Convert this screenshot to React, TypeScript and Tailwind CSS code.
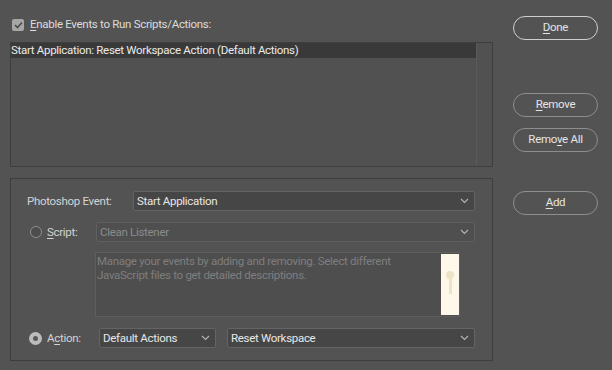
import React from "react";

const font = { fontFamily: 'Roboto, "Open Sans", sans-serif' };

function Chevron() {
  return (
    <svg width="9" height="6" viewBox="0 0 9 6" className="shrink-0">
      <path d="M1 1 L4.5 4.5 L8 1" fill="none" stroke="#b5b5b5" strokeWidth="1.1" />
    </svg>
  );
}

function Select({ text, className, disabled }: { text: string; className: string; disabled?: boolean }) {
  return (
    <div
      className={
        "h-[20px] flex items-center justify-between pl-[3px] pr-[5px] border rounded-[2px] " +
        (disabled
          ? "border-[#5f5f5f] bg-[#4f4f4f] text-[#8c8c8c] "
          : "border-[#646464] bg-[#464646] text-[#e6e6e6] ") +
        className
      }
    >
      <span className="text-[11.5px] leading-none pt-[1px]">{text}</span>
      <Chevron />
    </div>
  );
}

function Btn({ children, bright, className }: { children: React.ReactNode; bright?: boolean; className?: string }) {
  return (
    <div
      className={
        "w-[85px] h-[24px] rounded-full border flex items-center justify-center text-[11.5px] text-[#e4e4e4] " +
        (bright ? "border-[#cfcfcf] " : "border-[#8e8e8e] ") +
        (className || "")
      }
    >
      {children}
    </div>
  );
}

export default function App() {
  return (
    <div className="w-[612px] h-[370px] bg-[#535353] flex overflow-hidden tracking-[-0.3px]" style={font}>
      <div className="ml-[10px] w-[483px] flex flex-col pt-[18px]">
        <div className="h-[13px] flex items-center">
          <div className="ml-[2px] w-[12px] h-[12px] rounded-[2px] bg-[#a6a6a6] flex items-center justify-center">
            <svg width="9" height="8" viewBox="0 0 9 8">
              <path d="M1 4 L3.5 6.5 L8 1.5" fill="none" stroke="#4a4a4a" strokeWidth="1.6" />
            </svg>
          </div>
          <span className="ml-[6px] text-[11.5px] text-[#dcdcdc] leading-none pt-[1px]">
            <u className="underline-offset-2">E</u>nable Events to Run Scripts/Actions:
          </span>
        </div>

        <div className="mt-[11px] h-[125px] border border-[#3e3e3e] bg-[#515151] flex">
          <div className="flex-1">
            <div className="h-[15px] bg-[#393939] flex items-center text-[11.5px] text-[#ebebeb] leading-none">
              Start Application: Reset Workspace Action (Default Actions)
            </div>
          </div>
          <div className="w-[16px] border-l border-[#5a5a5a]" />
        </div>

        <div className="mt-[11px] h-[183px] border border-[#3e3e3e] flex flex-col pt-[12px] pr-[17px]">
          <div className="flex items-center">
            <span className="ml-[16px] w-[106px] text-[11.5px] text-[#d4d4d4] leading-none pt-[1px]">Photoshop Event:</span>
            <Select text="Start Application" className="flex-1" />
          </div>

          <div className="mt-[11px] flex items-center">
            <div className="ml-[19px] w-[12px] h-[12px] rounded-full border border-[#8f8f8f] bg-[#4c4c4c]" />
            <span className="ml-[5px] w-[49px] text-[11.5px] text-[#d4d4d4] leading-none pt-[1px]">
              <u className="underline-offset-2">S</u>cript:
            </span>
            <Select text="Clean Listener" className="flex-1" disabled />
          </div>

          <div className="mt-[10px] ml-[84px] mr-[15px] h-[65px] border border-[#5e5e5e] bg-[#4e4e4e] flex">
            <div className="flex-1 pl-[1px] pt-[1px] text-[11.5px] leading-[14px] text-[#7e7e7e]">
              Manage your events by adding and removing. Select different JavaScript files to get detailed descriptions.
            </div>
            <div className="w-[18px] my-[1px] bg-[#fdf8e9] flex flex-col items-center pt-[17px]">
              <div className="w-[8px] h-[8px] rounded-full bg-[#ece4c4]" />
              <div className="w-[3px] h-[17px] -mt-[2px] bg-[#ece4c4]" />
            </div>
          </div>

          <div className="mt-[11px] flex items-center">
            <div className="ml-[18px] w-[13px] h-[13px] rounded-full bg-[#bcbcbc] flex items-center justify-center">
              <div className="w-[5px] h-[5px] rounded-full bg-[#5a5a5a]" />
            </div>
            <span className="ml-[5px] w-[52px] text-[11.5px] text-[#d4d4d4] leading-none pt-[1px]">
              A<u className="underline-offset-2">c</u>tion:
            </span>
            <Select text="Default Actions" className="w-[117px]" />
            <Select text="Reset Workspace" className="ml-[11px] flex-1" />
          </div>
        </div>
      </div>

      <div className="ml-[20px] flex flex-col pt-[16px]">
        <Btn bright>
          <span><u className="underline-offset-2">D</u>one</span>
        </Btn>
        <Btn className="mt-[53px]">
          <span><u className="underline-offset-2">R</u>emove</span>
        </Btn>
        <Btn className="mt-[11px]">
          <span>Remo<u className="underline-offset-2">v</u>e All</span>
        </Btn>
        <Btn className="mt-[39px]">
          <span><u className="underline-offset-2">A</u>dd</span>
        </Btn>
      </div>
    </div>
  );
}
